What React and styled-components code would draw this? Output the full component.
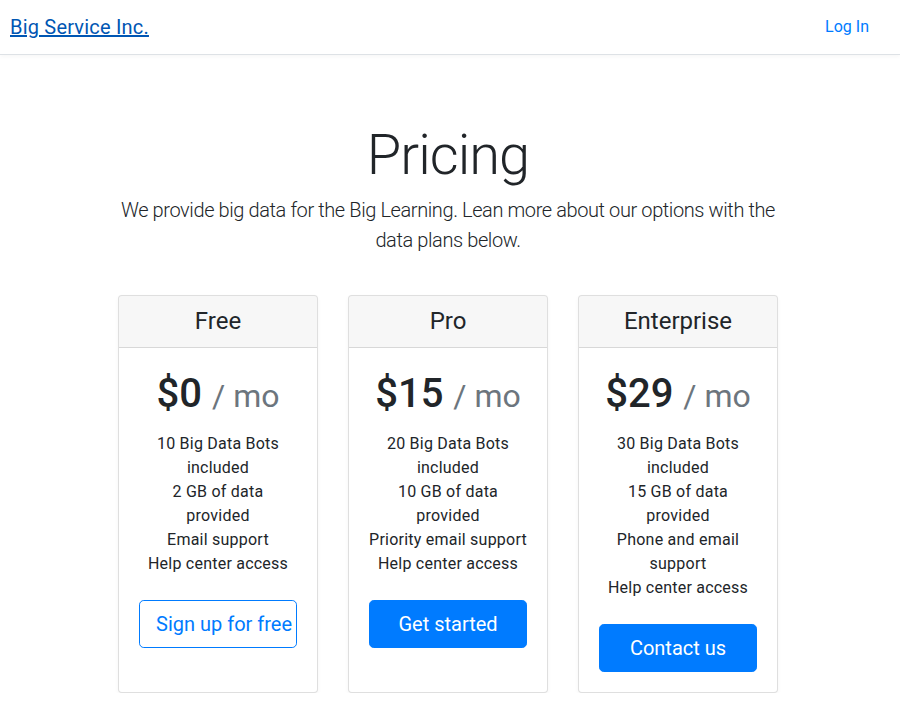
import React from "react";
import styled, { createGlobalStyle } from "styled-components";

const GlobalStyle = createGlobalStyle`
  html, body {
    margin: 0;
    padding: 0;
    background: #fff;
  }
  body {
    font-family: Roboto, "Liberation Sans", Arial, sans-serif;
    font-size: 16px;
    line-height: 1.5;
    color: #212529;
  }
  * {
    box-sizing: border-box;
  }
`;

const Header = styled.header`
  display: flex;
  align-items: center;
  justify-content: space-between;
  height: 55px;
  padding: 0 23px 0 10px;
  border-bottom: 1px solid #dee2e6;
  box-shadow: 0 0.125rem 0.25rem rgba(0, 0, 0, 0.03);
`;

const Brand = styled.a`
  font-size: 20px;
  line-height: 30px;
  letter-spacing: 0.2px;
  color: #0056b3;
  text-decoration: underline;
  cursor: pointer;
`;

const NavLink = styled.a`
  padding: 8px;
  font-size: 16px;
  color: #007bff;
  text-decoration: none;
  cursor: pointer;
`;

const Main = styled.main`
  padding: 67px 4px 0 0;
`;

const Intro = styled.div`
  max-width: 700px;
  margin: 0 auto;
  padding: 0 16px 24px;
  text-align: center;
`;

const Title = styled.h1`
  margin: 0 0 6px;
  font-size: 56px;
  font-weight: 300;
  line-height: 1.2;
  letter-spacing: -1px;
`;

const Lead = styled.p`
  margin: 0 0 16px;
  font-size: 20px;
  font-weight: 300;
  line-height: 1.5;
  letter-spacing: -0.4px;
`;

const Deck = styled.div`
  display: flex;
  justify-content: center;
  align-items: stretch;
  gap: 30px;
`;

const Card = styled.div`
  display: flex;
  flex-direction: column;
  width: 200px;
  border: 1px solid rgba(0, 0, 0, 0.125);
  border-radius: 4px;
  box-shadow: 0 0.125rem 0.25rem rgba(0, 0, 0, 0.04);
  text-align: center;
  background: #fff;
`;

const CardHeader = styled.div`
  padding: 11px 20px;
  background: rgba(0, 0, 0, 0.03);
  border-bottom: 1px solid rgba(0, 0, 0, 0.125);
  border-radius: 3px 3px 0 0;
`;

const PlanName = styled.h4`
  margin: 0;
  font-size: 24px;
  font-weight: 400;
  line-height: 1.2;
`;

const CardBody = styled.div`
  padding: 20px;
`;

const Price = styled.h1`
  margin: 2px 0 14px;
  font-size: 40px;
  font-weight: 500;
  line-height: 1.2;
`;

const Per = styled.small`
  font-size: 80%;
  font-weight: 400;
  color: #6c757d;
`;

const Features = styled.ul`
  list-style: none;
  margin: 0 0 24px;
  padding: 0;
  letter-spacing: 0.23px;
`;

const Button = styled.button`
  display: block;
  width: 100%;
  padding: 8px 16px;
  font-family: inherit;
  font-size: 20px;
  line-height: 1.5;
  border-radius: 4.8px;
  border: 1px solid #007bff;
  white-space: nowrap;
  overflow: hidden;
  cursor: pointer;
  color: ${(p) => (p.$outline ? "#007bff" : "#fff")};
  background: ${(p) => (p.$outline ? "transparent" : "#007bff")};
`;

const plans = [
  {
    name: "Free",
    price: "$0",
    features: ["10 Big Data Bots included", "2 GB of data provided", "Email support", "Help center access"],
    cta: "Sign up for free",
    outline: true,
  },
  {
    name: "Pro",
    price: "$15",
    features: ["20 Big Data Bots included", "10 GB of data provided", "Priority email support", "Help center access"],
    cta: "Get started",
  },
  {
    name: "Enterprise",
    price: "$29",
    features: ["30 Big Data Bots included", "15 GB of data provided", "Phone and email support", "Help center access"],
    cta: "Contact us",
  },
];

export default function App() {
  return (
    <>
      <GlobalStyle />
      <Header>
        <Brand>Big Service Inc.</Brand>
        <NavLink>Log In</NavLink>
      </Header>
      <Main>
        <Intro>
          <Title>Pricing</Title>
          <Lead>
            We provide big data for the Big Learning. Lean more about our options with the data plans below.
          </Lead>
        </Intro>
        <Deck>
          {plans.map((plan) => (
            <Card key={plan.name}>
              <CardHeader>
                <PlanName>{plan.name}</PlanName>
              </CardHeader>
              <CardBody>
                <Price>
                  {plan.price} <Per>/ mo</Per>
                </Price>
                <Features>
                  {plan.features.map((f) => (
                    <li key={f}>{f}</li>
                  ))}
                </Features>
                <Button $outline={plan.outline}>{plan.cta}</Button>
              </CardBody>
            </Card>
          ))}
        </Deck>
      </Main>
    </>
  );
}
